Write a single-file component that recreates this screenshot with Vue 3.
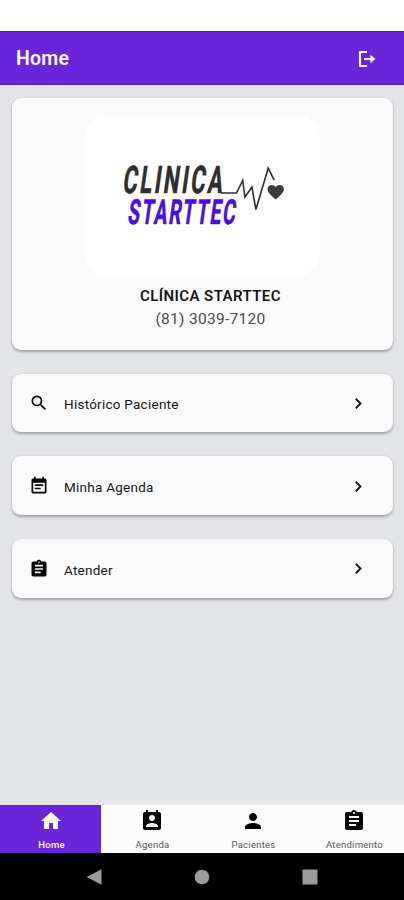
<script setup>
const icons = {
  search: 'M15.5 14h-.79l-.28-.27A6.47 6.47 0 0 0 16 9.5 6.5 6.5 0 1 0 9.5 16c1.61 0 3.09-.59 4.23-1.57l.27.28v.79l5 4.99L20.49 19l-4.99-5zm-6 0C7.01 14 5 11.99 5 9.5S7.01 5 9.5 5 14 7.01 14 9.5 11.99 14 9.5 14z',
  note: 'M17 10H7v2h10v-2zm2-7h-1V1h-2v2H8V1H6v2H5c-1.11 0-1.99.9-1.99 2L3 19c0 1.1.89 2 2 2h14c1.1 0 2-.9 2-2V5c0-1.1-.9-2-2-2zm0 16H5V8h14v11zm-5-5H7v2h7v-2z',
  clipboard: 'M19 3h-4.18C14.4 1.84 13.3 1 12 1s-2.4.84-2.82 2H5c-1.1 0-2 .9-2 2v14c0 1.1.9 2 2 2h14c1.1 0 2-.9 2-2V5c0-1.1-.9-2-2-2zm-7 0c.55 0 1 .45 1 1s-.45 1-1 1-1-.45-1-1 .45-1 1-1zm2 14H7v-2h7v2zm3-4H7v-2h10v2zm0-4H7V7h10v2z',
  home: 'M10 20v-6h4v6h5v-8h3L12 3 2 12h3v8z',
  contact: 'M19 3h-1V1h-2v2H8V1H6v2H5c-1.11 0-2 .9-2 2v14c0 1.1.89 2 2 2h14c1.1 0 2-.9 2-2V5c0-1.1-.9-2-2-2zm-7 3c1.66 0 3 1.34 3 3s-1.34 3-3 3-3-1.34-3-3 1.34-3 3-3zm6 12H6v-1c0-2 4-3.1 6-3.1s6 1.1 6 3.1v1z',
  person: 'M12 12c2.21 0 4-1.79 4-4s-1.79-4-4-4-4 1.79-4 4 1.79 4 4 4zm0 2c-2.67 0-8 1.34-8 4v2h16v-2c0-2.66-5.33-4-8-4z',
}
const items = [
  { label: 'Histórico Paciente', icon: icons.search },
  { label: 'Minha Agenda', icon: icons.note },
  { label: 'Atender', icon: icons.clipboard },
]
const tabs = [
  { label: 'Home', icon: icons.home, active: true },
  { label: 'Agenda', icon: icons.contact },
  { label: 'Pacientes', icon: icons.person },
  { label: 'Atendimento', icon: icons.clipboard },
]
</script>

<template>
  <div class="screen">
    <header class="bar">
      <h1>Home</h1>
      <svg class="logout" viewBox="0 0 18 18" fill="none">
        <path d="M9 2H2v14h7" stroke="#fff" stroke-width="2.1" stroke-linejoin="round" />
        <path d="M6 8h6.3V4.800L17.500 9l-5.200 4.200V10H6z" fill="#fff" />
      </svg>
    </header>
    <main>
      <section class="card clinic">
        <svg class="logo" viewBox="85 116 235 159">
          <g font-family="Roboto, sans-serif" font-weight="700" stroke-width=".6">
            <text transform="translate(122 193) skewX(-8) scale(.58 1)" font-size="38" letter-spacing="4.500" fill="#2f2d30" stroke="#2f2d30">CLINICA</text>
            <text transform="translate(127 224.200) skewX(-8) scale(.56 1)" font-size="34.500" letter-spacing="3.100" fill="#4b0be0" stroke="#4b0be0">STARTTEC</text>
          </g>
          <path d="M221 193h15.500l6.200-12.500 2.200 16.500 7-10 4 22.500 12.300-41.300 6 12" fill="none" stroke="#2f2d30" stroke-width="1.600" />
          <path d="M275.700 199.500c-2.300-2.600-8.200-6.300-8.200-10.300 0-5 6-5.700 8.200-1.900 2.200-3.800 8.200-3.100 8.200 1.900 0 4-5.900 7.700-8.200 10.300z" fill="#3c3b3e" />
        </svg>
        <h2>CLÍNICA STARTTEC</h2>
        <p>(81) 3039-7120</p>
      </section>
      <a v-for="item in items" :key="item.label" class="card item">
        <svg class="lead" viewBox="0 0 24 24"><path :d="item.icon" /></svg>
        <span>{{ item.label }}</span>
        <svg class="chevron" viewBox="0 0 12 12"><path d="M3.500 1.600 7.900 6l-4.400 4.400" /></svg>
      </a>
    </main>
    <nav class="tabs">
      <a v-for="tab in tabs" :key="tab.label" :class="{ active: tab.active }">
        <svg viewBox="0 0 24 24"><path :d="tab.icon" /></svg>
        <span>{{ tab.label }}</span>
      </a>
    </nav>
    <footer class="system">
      <svg viewBox="0 0 16 16"><path d="M15.500 .3v15.400L.5 8z" /></svg>
      <svg viewBox="0 0 16 16"><circle cx="8" cy="8" r="7.300" /></svg>
      <svg viewBox="0 0 16 16"><rect x=".5" y=".5" width="15" height="15" rx="1" /></svg>
    </footer>
  </div>
</template>

<style>
body { margin: 0; background: #fff; }
</style>

<style scoped>
.screen {
  width: 404px;
  height: 900px;
  box-sizing: border-box;
  padding-top: 31px;
  display: flex;
  flex-direction: column;
  background: #fff;
  font-family: Roboto, sans-serif;
  color: #151515;
  overflow: hidden;
}
.bar {
  height: 54px;
  flex: none;
  box-sizing: border-box;
  padding: 2px 28px 0 16px;
  display: flex;
  align-items: center;
  justify-content: space-between;
  background: #6b25d8;
  border-top: 1px solid #5a12c4;
  border-bottom: 1px solid #5a12c4;
}
h1 { margin: 0; font-size: 19.500px; line-height: 24px; font-weight: 600; letter-spacing: .2px; color: #fff; }
.logout { width: 18px; height: 18px; }
main {
  flex: 1;
  min-height: 0;
  padding: 13px 11px 0 12px;
  display: flex;
  flex-direction: column;
  gap: 24px;
  background: #e4e5e9;
}
.card {
  box-sizing: border-box;
  border-radius: 9px;
  background: #fafafa;
  box-shadow: 0 1.500px 3px rgba(0, 0, 0, .3);
}
.clinic {
  height: 251.500px;
  flex: none;
  padding-top: 18px;
  display: flex;
  flex-direction: column;
  align-items: center;
}
.logo { width: 235px; height: 159px; border-radius: 21px; background: #fff; display: block; }
h2 { margin: 10px 0 0 16px; font-size: 15px; line-height: 22px; font-weight: 600; letter-spacing: .42px; }
p { margin: 0 0 0 16px; font-size: 15.500px; line-height: 24px; color: #4b4b4b; letter-spacing: .3px; }
.item {
  height: 58.700px;
  flex: none;
  padding: 1px 28px 0 17px;
  display: flex;
  align-items: center;
  font-size: 13.500px;
}
.item span { flex: 1; margin-left: 15px; padding-top: 2px; letter-spacing: .25px; }
.lead { width: 20px; height: 20px; }
.chevron { width: 13px; height: 13px; fill: none; stroke: #151515; stroke-width: 1.700; }
.tabs { height: 48px; flex: none; display: grid; grid-template-columns: repeat(4, 1fr); background: #fcfcfc; }
.tabs a {
  display: flex;
  flex-direction: column;
  align-items: center;
  padding-top: 4px;
  font-size: 9.500px;
  line-height: 12px;
  letter-spacing: .25px;
  color: #555;
}
.tabs svg { width: 24px; height: 24px; fill: #000; }
.tabs span { margin: 6px 0 0 2px; }
.tabs .active { background: #6b25d8; color: #fff; font-weight: 500; }
.tabs .active svg { fill: #fff; }
.system {
  height: 47px;
  flex: none;
  box-sizing: border-box;
  padding: 0 86px;
  display: flex;
  align-items: center;
  justify-content: space-between;
  background: #000;
}
.system svg { width: 16px; height: 16px; fill: #9b9b9b; }
</style>
